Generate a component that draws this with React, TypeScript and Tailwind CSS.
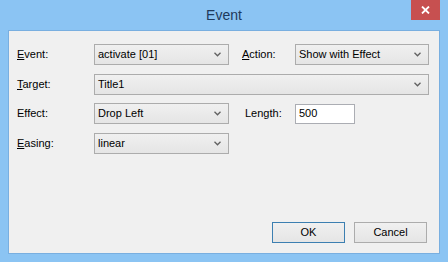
import React from 'react'

const font = { fontFamily: '"Liberation Sans", Arial, sans-serif' }

function Label({ text, mnemonic, className = '' }: { text: string; mnemonic?: boolean; className?: string }) {
  return (
    <span className={`text-[11px] leading-none text-black ${className}`}>
      {mnemonic ? (
        <>
          <span className="underline underline-offset-[1px]">{text[0]}</span>
          {text.slice(1)}
        </>
      ) : (
        text
      )}
    </span>
  )
}

function Combo({ value, width }: { value: string; width: string }) {
  return (
    <div
      className={`${width} h-[21px] flex items-center justify-between border border-[#acacac] bg-gradient-to-b from-[#f0f0f0] to-[#e5e5e5] pl-[3px] pr-[7px]`}
    >
      <span className="text-[11px] leading-none text-black">{value}</span>
      <svg width="7" height="5" viewBox="0 0 7 5">
        <polyline points="0.5,0.8 3.5,3.8 6.5,0.8" fill="none" stroke="#606060" strokeWidth="1.3" />
      </svg>
    </div>
  )
}

export default function App() {
  return (
    <div style={font} className="w-[448px] h-[262px] bg-[#8bc4f3] flex flex-col px-[8px] pb-[8px]">
      <div className="relative h-[30px] shrink-0 flex items-center justify-center">
        <span className="text-[14px] text-[#1e3a5c] mt-[1px]">Event</span>
        <div className="absolute right-0 top-0 w-[29px] h-[20px] bg-[#c75050] flex items-center justify-center">
          <svg width="9" height="8" viewBox="0 0 9 8">
            <path d="M1 0.5 L8 7.5 M8 0.5 L1 7.5" stroke="#fff" strokeWidth="1.8" />
          </svg>
        </div>
      </div>

      <div className="flex-1 bg-[#f0f0f0] border border-[#79afe0] flex flex-col pl-[8px] pr-[10px] pt-[13px] pb-[10px]">
        <div className="flex flex-col gap-[8.5px]">
          <div className="flex items-center h-[21px]">
            <Label text="Event:" mnemonic className="w-[77px]" />
            <Combo value="activate [01]" width="w-[135px]" />
            <Label text="Action:" mnemonic className="w-[53px] ml-[13px]" />
            <Combo value="Show with Effect" width="w-[134px]" />
          </div>
          <div className="flex items-center h-[21px]">
            <Label text="Target:" mnemonic className="w-[77px]" />
            <Combo value="Title1" width="w-[335px]" />
          </div>
          <div className="flex items-center h-[21px]">
            <Label text="Effect:" className="w-[77px]" />
            <Combo value="Drop Left" width="w-[135px]" />
            <Label text="Length:" className="w-[50px] ml-[16px]" />
            <div className="w-[60px] h-[20px] bg-white border border-[#abadb3] flex items-center pl-[3px]">
              <span className="text-[11px] leading-none text-black">500</span>
            </div>
          </div>
          <div className="flex items-center h-[21px]">
            <Label text="Easing:" mnemonic className="w-[77px]" />
            <Combo value="linear" width="w-[135px]" />
          </div>
        </div>

        <div className="mt-auto flex justify-end gap-[9px] pr-[2px]">
          <button className="w-[73px] h-[21px] border border-[#3c7fb1] bg-gradient-to-b from-[#f0f0f0] to-[#e5e5e5] text-[11px] leading-none text-black">
            OK
          </button>
          <button className="w-[73px] h-[21px] border border-[#acacac] bg-gradient-to-b from-[#f0f0f0] to-[#e5e5e5] text-[11px] leading-none text-black">
            Cancel
          </button>
        </div>
      </div>
    </div>
  )
}
